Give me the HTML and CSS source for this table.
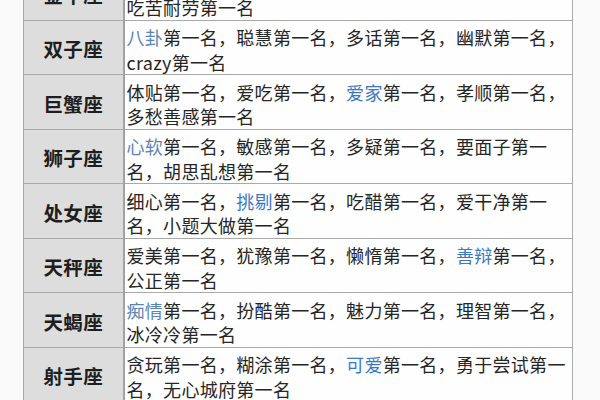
FILE: index.html
```html
<!DOCTYPE html>
<html lang="zh-CN">
<head>
<meta charset="utf-8">
<title>星座第一名</title>
<link rel="stylesheet" href="styles.css">
</head>
<body>
<div class="page">
  <table class="zodiac">
    <tr><th>金牛座</th><td>固执第一名，念旧第一名，小气第一名，踏实第一名，吃苦耐劳第一名</td></tr>
    <tr><th>双子座</th><td><span class="hl hl-soft">八卦</span>第一名，聪慧第一名，多话第一名，幽默第一名，crazy第一名</td></tr>
    <tr><th>巨蟹座</th><td>体贴第一名，爱吃第一名，<span class="hl">爱家</span>第一名，孝顺第一名，多愁善感第一名</td></tr>
    <tr><th>狮子座</th><td><span class="hl hl-soft">心软</span>第一名，敏感第一名，多疑第一名，要面子第一名，胡思乱想第一名</td></tr>
    <tr><th>处女座</th><td>细心第一名，<span class="hl">挑剔</span>第一名，吃醋第一名，爱干净第一名，小题大做第一名</td></tr>
    <tr><th>天秤座</th><td>爱美第一名，犹豫第一名，懒惰第一名，<span class="hl">善辩</span>第一名，公正第一名</td></tr>
    <tr><th>天蝎座</th><td><span class="hl hl-soft">痴情</span>第一名，扮酷第一名，魅力第一名，理智第一名，冰冷冷第一名</td></tr>
    <tr><th>射手座</th><td>贪玩第一名，糊涂第一名，<span class="hl">可爱</span>第一名，勇于尝试第一名，无心城府第一名</td></tr>
  </table>
</div>
</body>
</html>
```
FILE: styles.css
```css
html, body {
  margin: 0;
  padding: 0;
  background: #fafafa;
}

.page {
  display: flow-root;
  padding-left: 23px;
}

.zodiac {
  margin-top: -35px;
  width: 550px;
  border-collapse: collapse;
  table-layout: fixed;
  font-family: "Noto Sans CJK SC", sans-serif;
  color: #262626;
  border: 1px solid #a9a9a9;
}

.zodiac tr {
  border-bottom: 1px solid #a9a9a9;
}

.zodiac th {
  width: 100px;
  box-sizing: border-box;
  background: #dddddd;
  border-right: 2px solid #a2a2a2;
  font-size: 19.5px;
  font-weight: 700;
  letter-spacing: 0.4px;
  text-align: center;
  vertical-align: middle;
  padding: 4.5px 0 0 0;
  line-height: 24.5px;
  color: #1e1e1e;
}

.zodiac td {
  background: #fefefe;
  font-size: 18px;
  letter-spacing: 0.3px;
  line-height: 24.5px;
  padding: 4.5px 2px 0 2px;
  vertical-align: top;
}

.hl {
  color: #3a78c2;
}

.hl-soft {
  color: #5a85b4;
}
```
